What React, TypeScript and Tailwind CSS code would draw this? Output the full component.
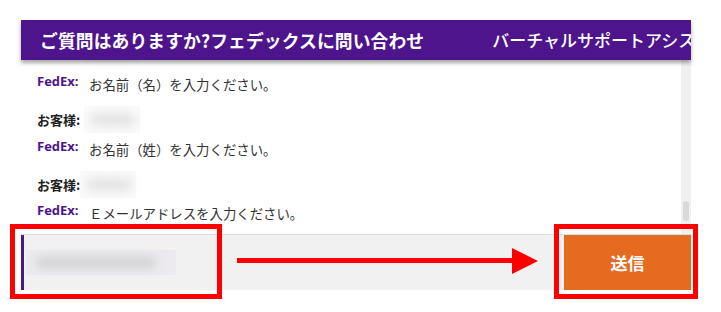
import React from 'react'

const jp = "font-['Noto_Sans_CJK_JP','Noto_Sans',sans-serif]"

function FedexRow({ text, className = '' }: { text: string; className?: string }) {
  return (
    <div className={`flex items-start ${className}`}>
      <span className="w-[52px] shrink-0 text-[13px] font-bold leading-[17px] text-[#4d148c] font-['Open_Sans',sans-serif]">
        FedEx:
      </span>
      <span className="text-[13.4px] leading-[22px] text-[#333]">{text}</span>
    </div>
  )
}

function CustomerRow({ blurLeft, className = '' }: { blurLeft: number; className?: string }) {
  return (
    <div className={`flex items-center ${className}`}>
      <span className="text-[13px] font-bold leading-[22px] text-[#222]">お客様:</span>
      <div className="relative h-[27px] w-[56px]" style={{ marginLeft: blurLeft }}>
        <div className="absolute inset-0 bg-[#fafafa]" />
        <div className="absolute left-[6px] right-[4px] top-[7px] bottom-[7px] rounded-full bg-[#e4e4e4] blur-[5px]" />
      </div>
    </div>
  )
}

export default function App() {
  return (
    <div className={`relative h-[312px] w-[721px] overflow-hidden bg-white ${jp}`}>
      <div className="ml-[21px] pt-[20px] w-[670px]">
        {/* header */}
        <div className="relative z-10 flex h-[40px] items-center whitespace-nowrap overflow-hidden bg-[#4d148c] pl-[19px] text-white shadow-[0_3px_4px_rgba(0,0,0,0.35)]">
          <span className="text-[17.8px] font-bold tracking-[0.1px]">ご質問はありますか?フェデックスに問い合わせ</span>
          <span className="ml-[68px] text-[17px] font-medium">バーチャルサポートアシスタント</span>
        </div>

        {/* chat */}
        <div className="flex h-[174px]">
          <div className="w-[660px] overflow-hidden pl-[16px]">
            <div className="-mt-[24px]">
              <CustomerRow blurLeft={4} className="opacity-60" />
              <FedexRow text="お名前（名）を入力ください。" className="mt-[10px]" />
              <CustomerRow blurLeft={4} className="mt-[11px]" />
              <FedexRow text="お名前（姓）を入力ください。" className="mt-[5px]" />
              <CustomerRow blurLeft={0} className="mt-[11px]" />
              <FedexRow text="Ｅメールアドレスを入力ください。" className="mt-[4px]" />
            </div>
          </div>
          <div className="relative w-[10px] bg-[#f0f0f0]">
            <div className="absolute left-[2px] right-[2px] top-[141px] h-[20px] rounded-full bg-[#d9d9d9]" />
          </div>
        </div>

        {/* input row */}
        <div className="flex h-[56px] border-t border-[#dcdcdc] bg-[#f1f1f1]">
          <div className="flex flex-1 items-center border-l-[3px] border-[#4d148c]">
            <div className="relative ml-[2px] h-[25px] w-[150px]">
              <div className="absolute inset-0 bg-[#e9e6ef] opacity-60" />
              <div className="absolute left-[10px] right-[20px] top-[7px] bottom-[7px] rounded-full bg-[#d2d2d2] blur-[5px]" />
            </div>
          </div>
          <button className="w-[127px] bg-[#e56b20] text-[17px] font-bold text-white">送信</button>
        </div>
      </div>

      {/* annotations */}
      <div className="absolute left-[10px] top-[224px] h-[75px] w-[212px] border-[5px] border-[#ff0000]" />
      <div className="absolute left-[554px] top-[224px] h-[75px] w-[144px] border-[5px] border-[#ff0000]" />
      <div className="absolute left-[237px] top-[258px] h-[5px] w-[277px] bg-[#ff0000]" />
      <svg className="absolute left-[512px] top-[248px]" width="26" height="26" viewBox="0 0 26 26">
        <polygon points="0,0 26,13 0,26" fill="#ff0000" />
      </svg>
    </div>
  )
}
